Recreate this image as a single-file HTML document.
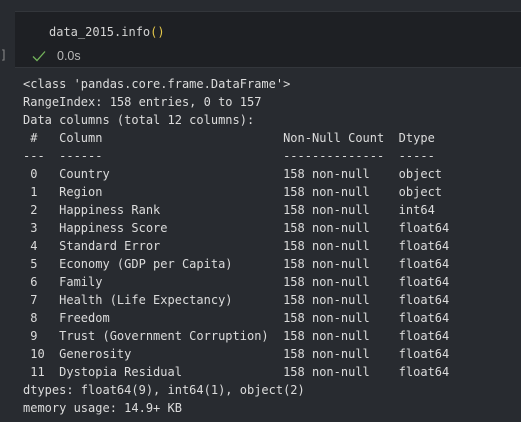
<!DOCTYPE html>
<html><head><style>
body{margin:0;width:521px;height:422px;background:#282b30;overflow:hidden;position:relative;font-family:"DejaVu Sans Mono","Liberation Mono",monospace;}
.cell{position:absolute;left:15px;top:11px;width:506px;height:55px;background:#1e2024;border-top:1px solid #33363b;border-bottom:1px solid #33363b;}
.code{position:absolute;left:49px;top:23px;font-size:12px;color:#d4d4d4;line-height:18px;white-space:pre;}
.t{position:absolute;left:57px;top:47px;font-family:"Liberation Sans",sans-serif;font-size:12.5px;color:#b8b8b8;line-height:18px;}
.chk{position:absolute;left:32px;top:50px;}
.br{position:absolute;left:0;top:46px;font-size:12px;color:#888;line-height:18px;}
pre{position:absolute;left:23px;top:75px;margin:0;font-family:inherit;font-size:12px;line-height:18px;color:#dcdcdc;}
</style></head><body>
<div class="cell"></div>
<div class="code">data_2015.info<span style="color:#e5c84a">()</span></div>
<div class="br">]</div>
<svg class="chk" width="14" height="12" viewBox="0 0 14 12"><path d="M1 6.5 L5 10.5 L13 1.5" fill="none" stroke="#73b35a" stroke-width="1.3"/></svg>
<div class="t">0.0s</div>
<pre>&lt;class 'pandas.core.frame.DataFrame'&gt;
RangeIndex: 158 entries, 0 to 157
Data columns (total 12 columns):
 #   Column                         Non-Null Count  Dtype  
---  ------                         --------------  -----  
 0   Country                        158 non-null    object 
 1   Region                         158 non-null    object 
 2   Happiness Rank                 158 non-null    int64  
 3   Happiness Score                158 non-null    float64
 4   Standard Error                 158 non-null    float64
 5   Economy (GDP per Capita)       158 non-null    float64
 6   Family                         158 non-null    float64
 7   Health (Life Expectancy)       158 non-null    float64
 8   Freedom                        158 non-null    float64
 9   Trust (Government Corruption)  158 non-null    float64
 10  Generosity                     158 non-null    float64
 11  Dystopia Residual              158 non-null    float64
dtypes: float64(9), int64(1), object(2)
memory usage: 14.9+ KB</pre>
</body></html>
